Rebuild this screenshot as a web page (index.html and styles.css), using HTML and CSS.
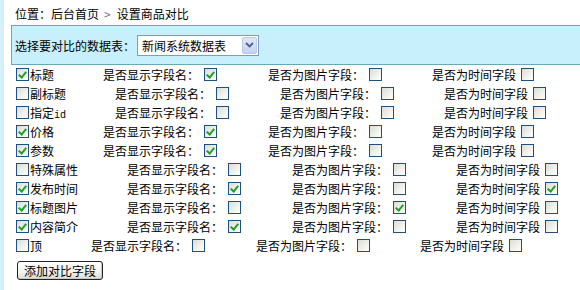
FILE: index.html
```html
<!DOCTYPE html>
<html>
<head>
<meta charset="utf-8">
<link rel="stylesheet" href="styles.css">
</head>
<body>
<div class="page">
  <div class="crumb">位置：后台首页<span class="sep">&gt;</span>设置商品对比</div>
  <div class="panel">
    <span class="plabel">选择要对比的数据表：</span>
    <div class="select"><span class="sel-text">新闻系统数据表</span><span class="arrow"><svg width="9" height="6" viewBox="0 0 9 6"><path d="M1 1 L4.5 4.5 L8 1" fill="none" stroke="#4d6185" stroke-width="1.8"/></svg></span></div>
  </div>
  <div class="rows">
    <div class="row"><span class="cb on"></span><span class="name">标题</span><span class="q">是否显示字段名：</span><span class="cb on"></span><span class="q q2">是否为图片字段：</span><span class="cb"></span><span class="q q3">是否为时间字段</span><span class="cb"></span></div>
    <div class="row"><span class="cb"></span><span class="name">副标题</span><span class="q">是否显示字段名：</span><span class="cb"></span><span class="q q2">是否为图片字段：</span><span class="cb"></span><span class="q q3">是否为时间字段</span><span class="cb"></span></div>
    <div class="row"><span class="cb"></span><span class="name">指定<span class="ascii">id</span></span><span class="q">是否显示字段名：</span><span class="cb"></span><span class="q q2">是否为图片字段：</span><span class="cb"></span><span class="q q3">是否为时间字段</span><span class="cb"></span></div>
    <div class="row"><span class="cb on"></span><span class="name">价格</span><span class="q">是否显示字段名：</span><span class="cb on"></span><span class="q q2">是否为图片字段：</span><span class="cb"></span><span class="q q3">是否为时间字段</span><span class="cb"></span></div>
    <div class="row"><span class="cb on"></span><span class="name">参数</span><span class="q">是否显示字段名：</span><span class="cb on"></span><span class="q q2">是否为图片字段：</span><span class="cb"></span><span class="q q3">是否为时间字段</span><span class="cb"></span></div>
    <div class="row"><span class="cb"></span><span class="name">特殊属性</span><span class="q">是否显示字段名：</span><span class="cb"></span><span class="q q2">是否为图片字段：</span><span class="cb"></span><span class="q q3">是否为时间字段</span><span class="cb"></span></div>
    <div class="row"><span class="cb on"></span><span class="name">发布时间</span><span class="q">是否显示字段名：</span><span class="cb on"></span><span class="q q2">是否为图片字段：</span><span class="cb"></span><span class="q q3">是否为时间字段</span><span class="cb on"></span></div>
    <div class="row"><span class="cb on"></span><span class="name">标题图片</span><span class="q">是否显示字段名：</span><span class="cb"></span><span class="q q2">是否为图片字段：</span><span class="cb on"></span><span class="q q3">是否为时间字段</span><span class="cb"></span></div>
    <div class="row"><span class="cb on"></span><span class="name">内容简介</span><span class="q">是否显示字段名：</span><span class="cb on"></span><span class="q q2">是否为图片字段：</span><span class="cb"></span><span class="q q3">是否为时间字段</span><span class="cb"></span></div>
    <div class="row"><span class="cb"></span><span class="name">顶</span><span class="q">是否显示字段名：</span><span class="cb"></span><span class="q q2">是否为图片字段：</span><span class="cb"></span><span class="q q3">是否为时间字段</span><span class="cb"></span></div>
  </div>
  <div class="actions"><button class="btn">添加对比字段</button></div>
</div>
</body>
</html>
```

FILE: styles.css
```css
html, body {
  margin: 0;
  padding: 0;
  background: #fff;
}
body {
  font-family: "Noto Sans CJK SC", "Liberation Sans", sans-serif;
  font-size: 12px;
  color: #000;
  width: 580px;
  height: 290px;
  overflow: hidden;
}
.page {
  border-left: 4px solid #d6f0fb;
  padding-left: 7px;
  height: 290px;
  box-sizing: border-box;
}
.crumb {
  height: 25px;
  padding-left: 4px;
  padding-top: 2px;
  box-sizing: border-box;
  line-height: 23px;
  white-space: nowrap;
}
.sep {
  color: #777;
  margin: 0 6px 0 5px;
}
.panel {
  height: 40px;
  box-sizing: border-box;
  border: 1px solid #6aa8b6;
  border-right: none;
  background: #c8effc;
  display: flex;
  align-items: center;
  padding-left: 3px;
}
.plabel {
  white-space: nowrap;
}
.select {
  margin-left: 2px;
  width: 122px;
  height: 21px;
  box-sizing: border-box;
  border: 1px solid #7f9db9;
  background: #fff;
  display: flex;
  align-items: center;
  justify-content: space-between;
}
.sel-text {
  padding-left: 4px;
  line-height: 19px;
}
.arrow {
  width: 15px;
  height: 17px;
  margin-right: 1px;
  box-sizing: border-box;
  border: 1px solid #b9c9ef;
  border-radius: 2px;
  background: linear-gradient(180deg, #dfe7fb 0%, #c3d2f7 100%);
  display: flex;
  align-items: center;
  justify-content: center;
}
.rows {
  padding-left: 5px;
}
.row {
  height: 19px;
  display: flex;
  align-items: center;
  white-space: nowrap;
}
.cb {
  width: 13px;
  height: 13px;
  box-sizing: border-box;
  border: 1px solid #1c5180;
  background: linear-gradient(135deg, #dcdcd5 0%, #f2f2ee 60%, #ffffff 100%);
  position: relative;
  flex: none;
}
.cb.on::after {
  content: "";
  position: absolute;
  left: 2px;
  top: 1px;
  width: 3px;
  height: 6px;
  border-right: 2px solid #21a121;
  border-bottom: 2px solid #21a121;
  transform: translate(1px, 0) rotate(40deg);
}
.name {
  margin-left: 1px;
  margin-right: 49px;
}
.ascii {
  font-family: "Liberation Mono", monospace;
  font-size: 10px;
}
.q + .cb {
  margin-left: 5px;
}
.q2 {
  margin-left: 51px;
}
.q3 {
  margin-left: 50px;
}
.actions {
  padding-left: 6px;
  margin-top: 6px;
}
.btn {
  font-family: "Noto Sans CJK SC", "Liberation Sans", sans-serif;
  font-size: 12px;
  color: #000;
  width: 86px;
  height: 19px;
  padding: 0;
  line-height: 17px;
  border: 1px solid #222;
  border-radius: 3px;
  background: linear-gradient(180deg, #ffffff 0%, #f2f2ee 60%, #dcdcd5 100%);
  box-shadow: inset -1px -1px 0 #c8c8c0;
}
```
